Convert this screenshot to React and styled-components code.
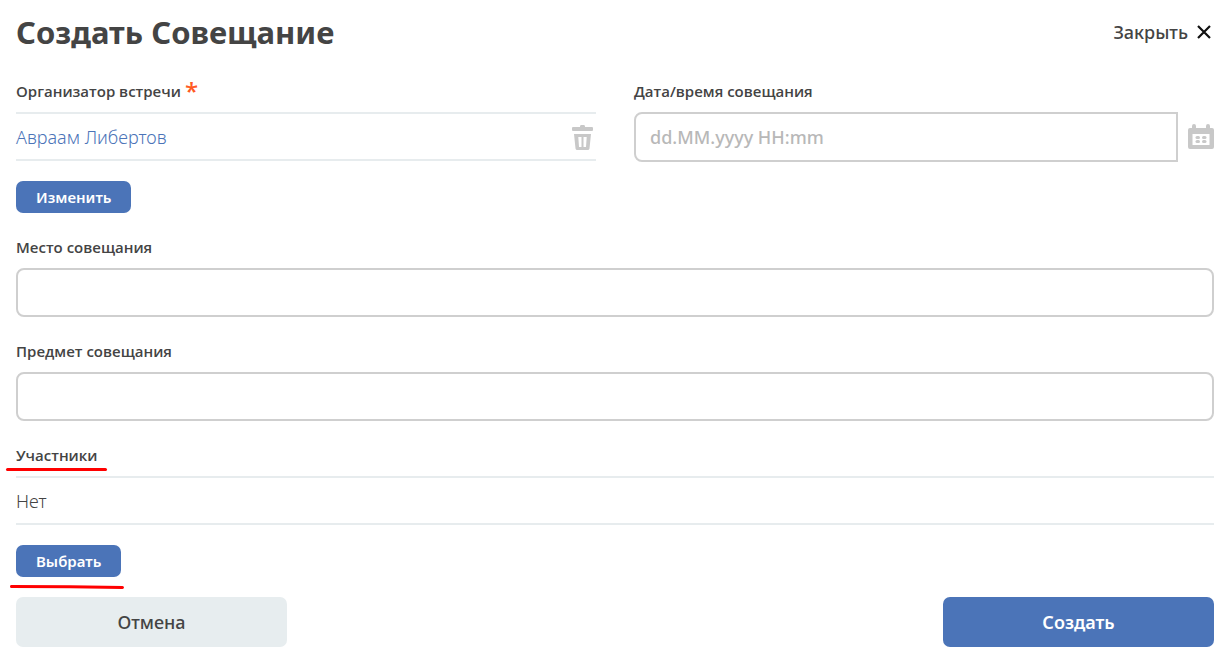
import React from 'react';
import styled, { createGlobalStyle, css } from 'styled-components';

const colors = {
  text: '#444444',
  blue: '#4b74b8',
  line: '#e7ecee',
  border: '#cfcfcf',
  icon: '#c8c8c8',
  placeholder: '#b8b8b8',
  required: '#ff5a23',
  mark: '#ff0000',
};

const GlobalStyle = createGlobalStyle`
  *, *::before, *::after { box-sizing: border-box; }
  body {
    margin: 0;
    background: #ffffff;
    color: ${colors.text};
    font-family: 'Noto Sans', 'Open Sans', sans-serif;
  }
  button, input { font: inherit; color: inherit; }
`;

const Form = styled.form`
  display: flex;
  flex-direction: column;
  padding: 11px 8px 15px 16px;
`;

const Header = styled.header`
  display: flex;
  align-items: center;
  justify-content: space-between;
  margin-bottom: 28px;
`;

const Title = styled.h1`
  margin: 0;
  font-size: 31px;
  line-height: 42px;
  font-weight: 700;
`;

const CloseButton = styled.button`
  display: flex;
  align-items: center;
  gap: 9px;
  padding: 0 3px;
  border: 0;
  background: none;
  font-size: 18px;
  line-height: 24px;
  font-weight: 500;
  cursor: pointer;
`;

const Fields = styled.div`
  display: flex;
  flex-direction: column;
  gap: 24px;
`;

const Columns = styled.div`
  display: grid;
  grid-template-columns: 1fr 1fr;
  gap: 38px;
  align-items: start;
`;

const Field = styled.div`
  display: flex;
  flex-direction: column;
  align-items: flex-start;
  min-width: 0;
`;

const labelStyle = css`
  position: relative;
  margin-bottom: 11px;
  font-family: 'Open Sans', 'Noto Sans', sans-serif;
  font-size: 15px;
  line-height: 20px;
  font-weight: 600;
`;

const Label = styled.label`
  ${labelStyle}
`;

const Caption = styled.div`
  ${labelStyle}
  display: flex;
  gap: 4px;
`;

const Required = styled.span`
  color: ${colors.required};
  font-size: 24px;
  font-weight: 600;
`;

const inputStyle = css`
  width: 100%;
  padding: 0 14px;
  border: 2px solid ${colors.border};
  background: #ffffff;
  font-size: 18px;
  font-weight: 500;
  outline: none;
  &::placeholder { color: ${colors.placeholder}; opacity: 1; }
  &:focus { border-color: ${colors.blue}; }
`;

const TextInput = styled.input`
  ${inputStyle}
  height: 49px;
  border-radius: 8px;
`;

const DateInput = styled.input`
  ${inputStyle}
  flex: 1;
  min-width: 0;
  height: 50px;
  border-radius: 8px 0 0 8px;
`;

const DateRow = styled.div`
  display: flex;
  align-items: center;
  gap: 10px;
  width: 100%;
`;

const ValueRow = styled.div`
  display: flex;
  align-items: center;
  justify-content: space-between;
  width: 100%;
  height: 49px;
  margin-bottom: 20px;
  padding-right: 3px;
  border: solid ${colors.line};
  border-width: 2px 0;
  font-size: 18px;
  line-height: 24px;
  font-weight: 350;
`;

const PersonLink = styled.a`
  color: ${colors.blue};
  text-decoration: none;
`;

const IconButton = styled.button`
  display: flex;
  padding: 0;
  border: 0;
  background: none;
  color: ${colors.icon};
  cursor: pointer;
`;

const SmallButton = styled.button`
  position: relative;
  height: 32px;
  padding: 0 20px;
  border: 0;
  border-radius: 7px;
  background: ${colors.blue};
  color: #ffffff;
  font-size: 15px;
  line-height: 20px;
  font-weight: 600;
  cursor: pointer;
`;

const Footer = styled.footer`
  display: flex;
  justify-content: space-between;
  margin-top: 20px;
`;

const LargeButton = styled.button`
  width: 271px;
  height: 50px;
  border: 0;
  border-radius: 7px;
  background: ${(p) => (p.$primary ? colors.blue : '#e7edef')};
  color: ${(p) => (p.$primary ? '#ffffff' : colors.text)};
  font-size: 18px;
  font-weight: ${(p) => (p.$primary ? 600 : 500)};
  cursor: pointer;
`;

const Underline = styled.svg`
  position: absolute;
  left: ${(p) => p.$left};
  top: 100%;
  margin-top: ${(p) => p.$offset};
  overflow: visible;
  pointer-events: none;
  fill: none;
  stroke: ${colors.mark};
  stroke-width: 3;
  stroke-linecap: round;
`;

const CloseIcon = () => (
  <svg width="14" height="14" viewBox="0 0 14 14" fill="none" stroke="#111" strokeWidth="2.2" aria-hidden="true">
    <path d="M1 1L13 13M13 1L1 13" />
  </svg>
);

const TrashIcon = () => (
  <svg width="21" height="26" viewBox="0 0 21 26" fill="currentColor" aria-hidden="true">
    <path d="M8 2.500Q8 1 9 1H12Q13 1 13 2.500V3H20Q21 3 21 4V6Q21 7 20 7H1Q0 7 0 6V4Q0 3 1 3H8Z" />
    <path
      fillRule="evenodd"
      d="M2 10H19L17.500 24.500Q17.200 26 15.800 26H5.200Q3.800 26 3.500 24.500ZM6.300 13L7 23H9.500V13ZM11.500 13V23H14L14.700 13Z"
    />
  </svg>
);

const CalendarIcon = () => (
  <svg width="26" height="26" viewBox="0 0 26 26" fill="currentColor" aria-hidden="true">
    <path
      fillRule="evenodd"
      d="M0 6Q0 4 2 4H4V2Q4 0 6 0T8 2V4H18V2Q18 0 20 0T22 2V4H24Q26 4 26 6V23Q26 25 24 25H2Q0 25 0 23ZM4.500 10V21H21.500V10Z"
    />
    <rect x="7.500" y="12" width="4.500" height="3" rx="1.500" />
    <rect x="14" y="12" width="4.500" height="3" rx="1.500" />
    <rect x="7.500" y="16" width="4.500" height="3" rx="1.500" />
    <rect x="14" y="16" width="4.500" height="3" rx="1.500" />
  </svg>
);

export default function App() {
  return (
    <>
      <GlobalStyle />
      <Form onSubmit={(e) => e.preventDefault()}>
        <Header>
          <Title>Создать Совещание</Title>
          <CloseButton type="button">
            Закрыть
            <CloseIcon />
          </CloseButton>
        </Header>

        <Fields>
          <Columns>
            <Field>
              <Caption>
                Организатор встречи
                <Required>*</Required>
              </Caption>
              <ValueRow>
                <PersonLink href="#organizer">Авраам Либертов</PersonLink>
                <IconButton type="button" aria-label="Удалить">
                  <TrashIcon />
                </IconButton>
              </ValueRow>
              <SmallButton type="button">Изменить</SmallButton>
            </Field>
            <Field>
              <Label htmlFor="date">Дата/время совещания</Label>
              <DateRow>
                <DateInput id="date" type="text" placeholder="dd.MM.yyyy HH:mm" />
                <IconButton type="button" aria-label="Календарь">
                  <CalendarIcon />
                </IconButton>
              </DateRow>
            </Field>
          </Columns>

          <Field>
            <Label htmlFor="place">Место совещания</Label>
            <TextInput id="place" type="text" />
          </Field>

          <Field>
            <Label htmlFor="subject">Предмет совещания</Label>
            <TextInput id="subject" type="text" />
          </Field>

          <Field>
            <Caption>
              Участники
              <Underline $left="-10px" $offset="2px" width="101" height="4" aria-hidden="true">
                <path d="M1.500 2.500H99.500" />
              </Underline>
            </Caption>
            <ValueRow>Нет</ValueRow>
            <SmallButton type="button">
              Выбрать
              <Underline $left="-6px" $offset="8px" width="114" height="4" aria-hidden="true">
                <path d="M1.500 1.500L60 1.700L112.500 2.500" />
              </Underline>
            </SmallButton>
          </Field>
        </Fields>

        <Footer>
          <LargeButton type="button">Отмена</LargeButton>
          <LargeButton type="submit" $primary>
            Создать
          </LargeButton>
        </Footer>
      </Form>
    </>
  );
}
